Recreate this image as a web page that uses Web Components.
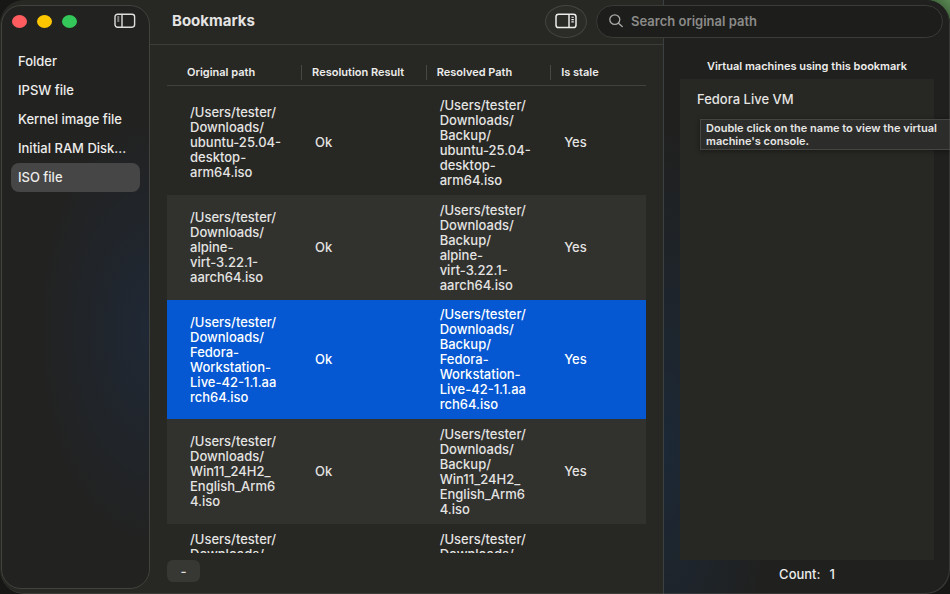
<!DOCTYPE html>
<html lang="en">
<head>
<meta charset="utf-8">
<title>Bookmarks</title>
<style>
html, body { height: 100%; }
body { margin: 0; overflow: hidden; background: linear-gradient(225deg, #5a8a54 0, #34502f 20px, #171815 50px); font: 500 13px/15px Inter, "Liberation Sans", sans-serif; color: #e4e4e2; }
</style>
</head>
<body>
<bookmark-app></bookmark-app>
<script>
const define = (name, html, setup) => customElements.define(name, class extends HTMLElement {
  connectedCallback() {
    if (this.shadowRoot) return;
    this.attachShadow({ mode: 'open' }).innerHTML = '<style>*{box-sizing:border-box}button,input{font:inherit;color:inherit;margin:0}</style>' + html;
    if (setup) setup(this.shadowRoot, this);
  }
});

define('window-controls', `<style>
:host { display: flex; gap: 10px; }
button { width: 15px; height: 13px; padding: 0; border: 0; border-radius: 50%; }
.close { background: #ff5c60; } .min { background: #fdc700; } .zoom { background: #34c759; }
</style>
<button class="close" aria-label="Close"></button><button class="min" aria-label="Minimize"></button><button class="zoom" aria-label="Zoom"></button>`);

define('nav-item', `<style>
:host { display: block; }
a { display: block; padding: 7px 7px 8px; border-radius: 8px; color: #ededeb; text-decoration: none; white-space: nowrap; overflow: hidden; text-overflow: ellipsis; line-height: 14px; }
:host([selected]) a { background: #464646; }
</style><a href="#"><slot></slot></a>`);

define('side-bar', `<style>
:host { display: block; padding: 5px 0 5px 1px; min-height: 0; }
aside { height: 100%; padding: 8px 9px; border: 1px solid #42423e; border-radius: 20px; background: radial-gradient(ellipse 110px 210px at 100% 56%, #1f2835, transparent), #222221; }
header { display: flex; justify-content: space-between; align-items: center; height: 14px; padding: 0 4px 0 1px; margin-bottom: 19px; }
.toggle { padding: 0; border: 0; background: none; display: flex; }
</style>
<aside>
<header><window-controls></window-controls>
<button class="toggle" aria-label="Toggle sidebar"><svg width="22" height="16" viewBox="0 0 22 16" fill="none" stroke="#dededc" stroke-width="1.4"><rect x="1" y="1.2" width="19.6" height="13" rx="2.6"/><path d="M8 1v13"/><path d="M3.3 4h2M3.3 6h2M3.3 8h2" stroke-width="1"/></svg></button></header>
<nav><nav-item>Folder</nav-item><nav-item>IPSW file</nav-item><nav-item>Kernel image file</nav-item><nav-item>Initial RAM Disk...</nav-item><nav-item selected>ISO file</nav-item></nav>
</aside>`);

define('tool-bar', `<style>
:host { display: flex; align-items: center; gap: 9px; padding: 0 7px 2px 22px; }
h1 { margin: 0; flex: 1; font-size: 15px; line-height: 18px; font-weight: 700; }
button { width: 42px; height: 33px; padding: 0; border: 1px solid #45453f; border-radius: 50%; background: #2b2b28; display: flex; align-items: center; justify-content: center; }
label { display: flex; align-items: center; gap: 8px; flex: 0 0 45%; height: 33px; padding: 0 12px; border: 1px solid #3b3b38; border-radius: 20px; background: #1d1d1b; }
input { flex: 1; min-width: 0; border: 0; padding: 0; background: none; outline: 0; font-weight: 600; }
input::placeholder { color: #8b8b89; opacity: 1; }
</style>
<h1>Bookmarks</h1>
<button aria-label="Toggle inspector"><svg width="22" height="16" viewBox="0 0 22 16" fill="none" stroke="#ededeb" stroke-width="1.5"><rect x="1" y="1.2" width="20" height="13.4" rx="2.6"/><path d="M14 1v13.4"/><path d="M16.4 4.3h2.4M16.4 6.6h2.4M16.4 8.9h2.4" stroke-width="1.1"/></svg></button>
<label><svg width="14" height="14" viewBox="0 0 14 14" fill="none" stroke="#aaa" stroke-width="1.3" stroke-linecap="round"><ellipse cx="5.8" cy="5.6" rx="5" ry="4.7"/><path d="M9.5 9.2 13.2 12.6"/></svg><input type="search" aria-label="Search original path" placeholder="Search original path"></label>`);

const home = ['/Users/tester/', 'Downloads/'];
const rows = [
  ['ubuntu-25.04-', 'desktop-', 'arm64.iso'],
  ['alpine-', 'virt-3.22.1-', 'aarch64.iso'],
  ['Fedora-', 'Workstation-', 'Live-42-1.1.aa', 'rch64.iso'],
  ['Win11_24H2_', 'English_Arm6', '4.iso']
].map(file => [[...home, ...file], 'Ok', [...home, 'Backup/', ...file], 'Yes']);
rows.push([home, '', home, '']);

define('bookmark-table', `<style>
:host { display: block; overflow: hidden; }
table { width: 100%; table-layout: fixed; border-collapse: separate; border-spacing: 0; }
col.a { width: 28%; } col.b { width: 26%; }
th { padding: 5px 0; height: 26px; border-bottom: 1px solid #41413d; text-align: left; font-size: 11px; font-weight: 600; color: #ededeb; white-space: nowrap; }
th span { display: block; height: 15px; border-left: 1px solid #474743; padding-left: 10px; }
th:first-child span { border: 0; padding-left: 20px; }
td { height: 105px; padding: 7px 0 7px 14px; white-space: pre; }
td:first-child { padding-left: 23px; }
tbody::before { content: ""; display: table-row; height: 4px; }
tr:nth-child(even) td { background: #31312e; }
tr:last-child td { vertical-align: top; padding-top: 8px; }
tr.selected td { background: #0558d2; color: #fff; }
</style>
<table><colgroup><col class="a"><col class="b"><col class="b"><col></colgroup>
<thead><tr><th scope="col"><span>Original path</span></th><th scope="col"><span>Resolution Result</span></th><th scope="col"><span>Resolved Path</span></th><th scope="col"><span>Is stale</span></th></tr></thead>
<tbody></tbody></table>`, root => {
  root.querySelector('tbody').innerHTML = rows.map(([from, result, to, stale], i) =>
    `<tr${i === 2 ? ' class="selected"' : ''}><td>${from.join('\n')}</td><td>${result}</td><td>${to.join('\n')}</td><td>${stale}</td></tr>`
  ).join('');
});

define('bookmark-list', `<style>
:host { display: flex; flex-direction: column; min-height: 0; padding: 15px 17px 12px; border-top: 1px solid #3c3c38; }
bookmark-table { flex: 1; min-height: 0; margin-bottom: 7px; }
button { width: 33px; height: 22px; padding: 0; border: 0; border-radius: 6px; background: #373734; }
</style>
<bookmark-table></bookmark-table><button aria-label="Remove bookmark">-</button>`);

define('tool-tip', `<style>
:host { display: block; width: 280px; padding: 2px 5px 1px; border: 1px solid #454543; background: #2c2c2b; box-shadow: 0 1px 5px #0006; font-size: 11px; font-weight: 600; line-height: 13px; color: #e6e6e4; }
</style><slot></slot>`);

define('vm-inspector', `<style>
:host { display: flex; flex-direction: column; padding: 59px 16px 12px; border-left: 1px solid #3b4043; background: radial-gradient(ellipse 110px 330px at 0 75%, #1c2836, transparent), #20201e; }
h2 { margin: 0 0 5px; text-align: center; font-size: 11px; line-height: 15px; font-weight: 600; color: #ededeb; }
ul { position: relative; flex: 1; margin: 0; padding: 13px 17px; list-style: none; background: #272723; }
tool-tip { position: absolute; left: 20px; top: 40px; }
footer { display: flex; justify-content: center; gap: 9px; padding-top: 7px; color: #ededeb; }
</style>
<h2>Virtual machines using this bookmark</h2>
<ul><li>Fedora Live VM</li><tool-tip role="tooltip">Double click on the name to view the virtual<br>machine's console.</tool-tip></ul>
<footer><span>Count:</span><span>1</span></footer>`);

define('bookmark-app', `<style>
:host { position: relative; display: grid; grid-template: 44px minmax(0, 1fr) / 150px minmax(0, 1fr) minmax(287px, 30%); height: 100vh; overflow: hidden; border-radius: 24px; background: #272724; }
:host::after { content: ""; position: absolute; inset: 0; border-radius: inherit; box-shadow: inset -1px -1px #5c5c5a66; pointer-events: none; }
side-bar { grid-area: 1 / 1 / 3 / 2; }
vm-inspector { grid-area: 1 / 3 / 3 / 4; }
tool-bar { grid-area: 1 / 2 / 2 / 4; z-index: 1; }
bookmark-list { grid-area: 2 / 2 / 3 / 3; }
</style>
<side-bar></side-bar><vm-inspector></vm-inspector><tool-bar></tool-bar><bookmark-list></bookmark-list>`);
</script>
</body>
</html>
